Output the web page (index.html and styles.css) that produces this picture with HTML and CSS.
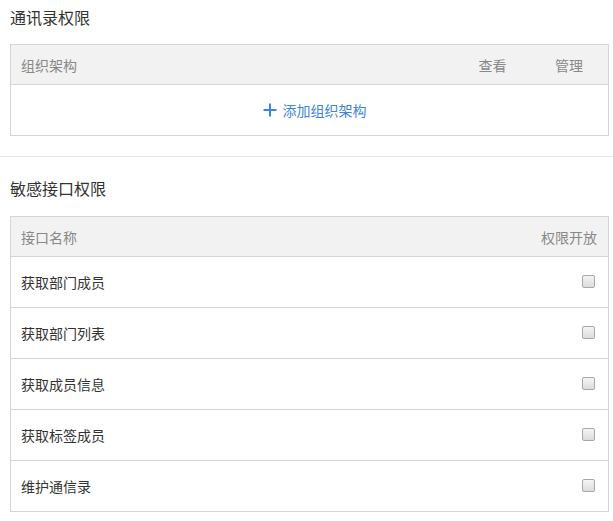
FILE: index.html
```html
<!DOCTYPE html>
<html lang="zh-CN">
<head>
<meta charset="utf-8">
<title>权限</title>
<link rel="stylesheet" href="styles.css">
</head>
<body>
<section class="section section-contacts">
  <h3 class="section-title">通讯录权限</h3>
  <div class="table">
    <div class="row row-head">
      <div class="cell cell-name">组织架构</div>
      <div class="cell cell-view">查看</div>
      <div class="cell cell-manage">管理</div>
    </div>
    <div class="row row-add">
      <a class="add-link" href="#">
        <svg class="add-icon" viewBox="0 0 14 14" width="14" height="14" aria-hidden="true"><path d="M7 0.5V13.5M0.5 7H13.5" stroke="currentColor" stroke-width="2" fill="none"/></svg>
        <span>添加组织架构</span>
      </a>
    </div>
  </div>
</section>
<section class="section section-api">
  <h3 class="section-title">敏感接口权限</h3>
  <div class="table">
    <div class="row row-head">
      <div class="cell cell-name">接口名称</div>
      <div class="cell cell-open">权限开放</div>
    </div>
    <div class="row row-item"><div class="cell cell-name">获取部门成员</div><div class="cell cell-check"><span class="checkbox"></span></div></div>
    <div class="row row-item"><div class="cell cell-name">获取部门列表</div><div class="cell cell-check"><span class="checkbox"></span></div></div>
    <div class="row row-item"><div class="cell cell-name">获取成员信息</div><div class="cell cell-check"><span class="checkbox"></span></div></div>
    <div class="row row-item"><div class="cell cell-name">获取标签成员</div><div class="cell cell-check"><span class="checkbox"></span></div></div>
    <div class="row row-item"><div class="cell cell-name">维护通信录</div><div class="cell cell-check"><span class="checkbox"></span></div></div>
  </div>
</section>
</body>
</html>
```
FILE: styles.css
```css
html, body {
  margin: 0;
  padding: 0;
  background: #fff;
}
body {
  font-family: "Microsoft YaHei", "Noto Sans CJK SC", "Noto Sans", sans-serif;
  color: #333;
  font-size: 14px;
  width: 613px;
}
.section {
  padding: 0 4px 0 10px;
}
.section-contacts {
  padding-bottom: 20px;
  border-bottom: 1px solid #e6e6e6;
}
.section-api {
  padding-top: 14px;
}
.section-title {
  margin: 0 0 10px 0;
  font-size: 16px;
  font-weight: normal;
  line-height: 34px;
  color: #333;
}
.section-api .section-title {
  margin-bottom: 11px;
}
.table {
  border: 1px solid #d5d5d5;
}
.row {
  display: flex;
  align-items: center;
}
.row-head {
  height: 39px;
  background: #f2f2f2;
  color: #888;
  border-bottom: 1px solid #d5d5d5;
}
.cell-name {
  flex: 1;
  padding-left: 10px;
}
.cell-view {
  width: 75px;
  text-align: center;
}
.cell-manage {
  width: 78px;
  text-align: center;
}
.cell-open {
  padding-right: 11px;
}
.row-add {
  height: 50px;
  justify-content: center;
}
.add-link {
  display: flex;
  align-items: center;
  gap: 6px;
  color: #3d85d6;
  text-decoration: none;
  margin-left: 10px;
}
.add-icon {
  display: block;
}
.row-item {
  height: 50px;
  border-bottom: 1px solid #d5d5d5;
}
.row-item:last-child {
  border-bottom: none;
}
.cell-check {
  padding-right: 13px;
  display: flex;
  align-items: center;
}
.checkbox {
  display: block;
  width: 11px;
  height: 11px;
  border: 1px solid #a8a8a8;
  border-radius: 2px;
  background: linear-gradient(#f4f4f4, #dcdcdc);
  margin-top: -2px;
}
```
